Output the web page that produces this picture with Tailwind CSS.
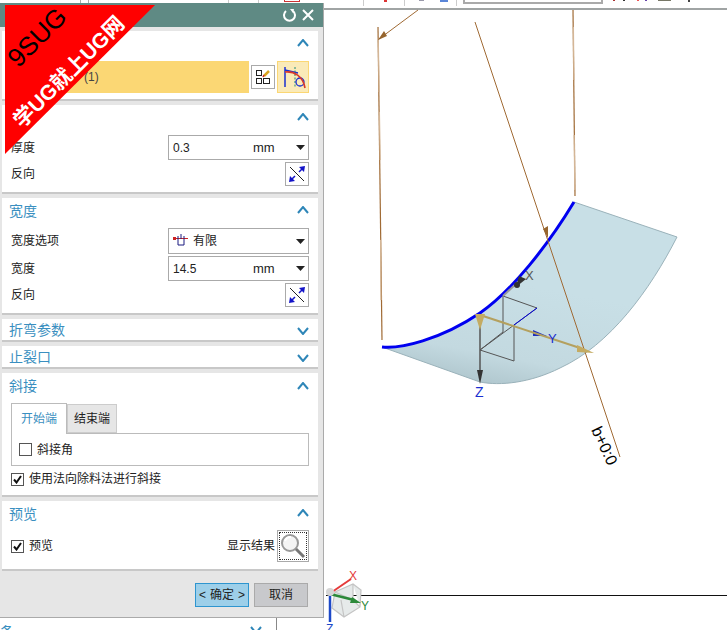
<!DOCTYPE html>
<html lang="en">
<head>
  <meta charset="UTF-8" />
  <title>轮廓弯边</title>
  <script src="https://cdn.jsdelivr.net/npm/@tailwindcss/browser@4"></script>
</head>
<body class="bg-white">
  <div class="relative w-[727px] h-[630px] overflow-hidden bg-white text-[12px] text-[#222] font-['Liberation_Sans','Noto_Sans_CJK_SC',sans-serif]">

    <!-- toolbar scraps at top -->
    <div class="absolute left-0 top-0 w-[727px] h-[10px] border-b-2 border-[#a0a4a4] bg-white">
      <div class="absolute left-[80px] top-0 w-[9px] h-[3px] border-x border-[#aaa]"></div>
      <div class="absolute left-[463px] -top-[2px] w-[140px] h-[6px] border-2 border-[#aaa]"></div>
      <div class="absolute left-[228px] top-0 w-[1px] h-[3px] bg-[#ccc]"></div>
      <div class="absolute left-[258px] top-0 w-[1px] h-[3px] bg-[#ccc]"></div>
      <div class="absolute left-[284px] top-0 w-[16px] h-[2px] border-b border-x border-[#c33]"></div>
      <div class="absolute left-[363px] top-0 w-[1px] h-[6px] bg-[#ccc]"></div>
      <div class="absolute left-[404px] top-0 w-[1px] h-[6px] bg-[#ccc]"></div>
      <div class="absolute left-[456px] top-0 w-[1px] h-[6px] bg-[#ccc]"></div>
      <div class="absolute left-[384px] top-0 w-[3px] h-[2px] bg-[#d33]"></div>
      <div class="absolute left-[419px] top-0 w-[5px] h-[1px] bg-[#99a]"></div>
      <div class="absolute left-[440px] top-0 w-[8px] h-[2px] bg-[#5a86d8]"></div>
      <div class="absolute left-[613px] top-0 w-[2px] h-[1px] bg-[#a33]"></div>
      <div class="absolute left-[623px] top-0 w-[2px] h-[1px] bg-[#333]"></div>
      <div class="absolute left-[637px] top-0 w-[2px] h-[1px] bg-[#e55]"></div>
      <div class="absolute left-[645px] top-0 w-[2px] h-[1px] bg-[#64a]"></div>
      <div class="absolute left-[658px] top-0 w-[13px] h-[1px] bg-[#776]"></div>
      <div class="absolute left-[688px] top-0 w-[2px] h-[2px] bg-[#444]"></div>
    </div>

    <!-- 3D view -->
    <svg class="absolute left-0 top-0" width="727" height="630" viewBox="0 0 727 630" fill="none">
      <defs>
        <linearGradient id="sheet" gradientUnits="userSpaceOnUse" x1="500" y1="280" x2="480" y2="385">
          <stop offset="0" stop-color="#c8dfe6" />
          <stop offset="0.7" stop-color="#c3d9e0" />
          <stop offset="1" stop-color="#afc6cd" />
        </linearGradient>
      </defs>
      <line x1="326" y1="595.5" x2="727" y2="595.5" stroke="#111" />
      <path d="M382 347 C400 349 440 340 480 313 C512 291 548 245 574 202 L677 237 C650 290 610 345 560 368 C530 383 500 386 480 382 Z" fill="url(#sheet)" />
      <path d="M382 347 L480 382 C500 386 530 383 560 368 C610 345 650 290 677 237 L574 202" stroke="#9ab2ba" stroke-width="1" />
      <path d="M382 347 C400 349 440 340 480 313 C512 291 548 245 574 202" stroke="#0000f0" stroke-width="3" />
      <path d="M378 27 L382 340" stroke="#a06a34" stroke-width="1.2" />
      <path d="M378.3 40 L379.1 92 M379.4 112 L380.2 160 M380.6 240 L381 300" stroke="#d4b696" stroke-width="1.2" />
      <path d="M573 10 L575 196" stroke="#a06a34" stroke-width="1.2" />
      <path d="M573.4 27 L573.9 80 M574.2 135 L574.8 190" stroke="#d4b696" stroke-width="1.2" />
      <path d="M475 22 L620 457" stroke="#a06a34" stroke-width="1" />
      <path d="M418 10 L379 39" stroke="#a06a34" stroke-width="1" />
      <path d="M378 40 L384 31 L387 36 Z" fill="#96652e" />
      <path d="M548 238 L543 229 L548 226 Z" fill="#96652e" />
      <!-- wcs box -->
      <path d="M503 296 L537 308 L514 325 L480 350 L514 361 L514 325 M503 296 L503 332 L480 350" stroke="#555" />
      <path d="M514 325 L537 308" stroke="#0000e0" />
      <path d="M503 296 L518 282" stroke="#999" stroke-width="2" />
      <path d="M516 287 L526 279 L519 276 Z" fill="#333" /><circle cx="517" cy="285" r="3" fill="#333" />
      <path d="M480 316 L480 378" stroke="#555" stroke-width="1.5" />
      <path d="M477 370 L483 370 L480 384 Z" fill="#333" />
      <path d="M533 330 L547 336 L533 336 Z" fill="#1f2fc0" />
      <path d="M480 315 L580 348" stroke="#b4a05e" stroke-width="2" />
      <path d="M475 314 L485 314 L480 330 Z" fill="#c4ab62" />
      <path d="M577 345 L594 353 L577 352 Z" fill="#c4ab62" />
      <text x="525" y="280" font-size="13" fill="#555" font-family="Liberation Sans">X</text>
      <text x="548" y="343" font-size="13" fill="#1a2fd0" font-family="Liberation Sans">Y</text>
      <text x="475" y="397" font-size="14" fill="#1a2fd0" font-family="Liberation Sans">Z</text>
      <!-- triad at lower left -->
      <path d="M335 592 L353 584 L361 590 L360 607 L344 617 L332 608 Z M353 584 L353 600 L360 607 M353 600 L335 592 M344 617 L341 600" fill="#e6eaea" stroke="#c4c4c4" stroke-width="1.2" />
      <path d="M332 592 L351 579" stroke="#e53b3b" stroke-width="2" />
      <path d="M330 594 L354 600" stroke="#2c8a3a" stroke-width="2.5" />
      <path d="M352 597 L361 603 L350 603 Z" fill="#2c8a3a" />
      <path d="M330 594 L330 622" stroke="#1d49c8" stroke-width="2.5" />
      <circle cx="330" cy="592" r="4" fill="#d6d6d6" />
      <text x="349" y="580" font-size="12" fill="#e53b3b" font-family="Liberation Sans">X</text>
      <text x="361" y="610" font-size="12" fill="#2c8a3a" font-family="Liberation Sans">Y</text>
      <text x="326" y="633" font-size="12" fill="#1d49c8" font-family="Liberation Sans">Z</text>
    </svg>
    <div class="absolute left-[580px] top-[439px] w-[48px] text-center text-[16px] leading-[14px] text-black rotate-[65deg]">b+0:0</div>

    <!-- leftover panel under the dialog -->
    <div class="absolute left-0 top-[618px] w-[277px] h-[12px] bg-white border-r border-[#888]">
      <div class="text-[14px] leading-[14px] mt-[7px] text-[#3a8fc0]">条</div>
      <svg class="absolute left-[250px] top-[8px]" width="12" height="8" viewBox="0 0 12 8" fill="none"><path d="M1 1 L6 7 L11 1" stroke="#2e86b8" stroke-width="2" /></svg>
    </div>

    <!-- dialog -->
    <div class="absolute left-0 top-[3px] w-[324px] h-[615px] bg-[#e6e6e6] border-r border-b border-[#aaa] flex flex-col">
      <div class="h-[24px] shrink-0 bg-[#5f8a84] flex items-center justify-end gap-[6px] pr-[9px] text-white">
        <svg width="14" height="14" viewBox="0 0 14 14" fill="none"><path d="M4 3 A5.5 5.5 0 1 0 11 3" stroke="#fff" stroke-width="2" /><path d="M8 1 L12 1 L11 5 Z" fill="#fff" /></svg>
        <svg width="12" height="12" viewBox="0 0 12 12" fill="none"><path d="M1 1 L11 11 M11 1 L1 11" stroke="#fff" stroke-width="2" /></svg>
      </div>

      <div class="flex flex-col gap-[4px] pl-[2px] pr-[5px] pt-[4px]">
        <!-- first group, title hidden under the ribbon -->
        <section class="bg-white border-b-2 border-[#c8c8c8] h-[70px] pl-[4px] pr-[9px]">
          <div class="h-[26px] mb-[4px] flex items-center justify-end">
            <svg class="mb-[2px]" width="12" height="8" viewBox="0 0 12 8" fill="none"><path d="M1 7 L6 1 L11 7" stroke="#2e86b8" stroke-width="2" /></svg>
          </div>
          <div class="flex items-center gap-[2px]">
            <div class="w-[243px] h-[32px] bg-[#fbd774] flex items-center pl-[78px] text-[#444]">(1)</div>
            <button class="w-[24px] h-[24px] bg-white border border-[#aaa] flex items-center justify-center">
              <svg width="16" height="16" viewBox="0 0 16 16" fill="none"><rect x="1.5" y="1.5" width="5" height="5" stroke="#222" /><rect x="1.5" y="9.5" width="5" height="5" stroke="#222" /><rect x="8.5" y="9.5" width="6" height="5" stroke="#222" /><path d="M9 7 L14 2" stroke="#d9a520" stroke-width="2.5" /><path d="M8 8 L9 6" stroke="#c22" stroke-width="1.5" /></svg>
            </button>
            <button class="w-[32px] h-[32px] bg-[#faeab8] border border-[#fbd774] flex items-center justify-center">
              <svg width="26" height="26" viewBox="0 0 26 26" fill="none"><path d="M5 3 L5 23" stroke="#1a2fd0" stroke-width="1.5" /><path d="M5 6 L18 9" stroke="#1a2fd0" stroke-width="1.3" /><path d="M15 3 L15 24" stroke="#1a8a7a" stroke-dasharray="2 1.5" /><circle cx="20" cy="18" r="4" stroke="#1a2fd0" stroke-width="1.3" /><path d="M5 8 C14 7 23 12 25 24" stroke="#d93a2a" stroke-width="1.6" /></svg>
            </button>
          </div>
        </section>

        <!-- 厚度 -->
        <section class="bg-white border-b-2 border-[#c8c8c8] h-[89px] pl-[9px] pr-[9px]">
          <div class="h-[26px] mb-[4px] flex items-center justify-end">
            <svg class="mb-[2px]" width="12" height="8" viewBox="0 0 12 8" fill="none"><path d="M1 7 L6 1 L11 7" stroke="#2e86b8" stroke-width="2" /></svg>
          </div>
          <div class="flex items-center justify-between">
            <span>厚度</span>
            <div class="w-[141px] h-[25px] border border-[#aaa] flex items-center pl-[4px] pr-[3px]">
              <span class="flex-1">0.3</span><span class="w-[43px] text-[13px] font-['Liberation_Sans']">mm</span>
              <svg width="9" height="5" viewBox="0 0 9 5"><path d="M0 0 L9 0 L4.5 5 Z" fill="#222" /></svg>
            </div>
          </div>
          <div class="flex items-center justify-between mt-[2px]">
            <span>反向</span>
            <button class="w-[24px] h-[24px] bg-white border border-[#aaa] flex items-center justify-center">
              <svg width="16" height="16" viewBox="0 0 16 16" fill="none"><path d="M1 1 L15 15" stroke="#222" /><path d="M3 13 L6 10 M13 3 L10 6" stroke="#1414c8" stroke-width="1.5" /><path d="M0 16 L1 10 L6 15 Z M16 0 L15 6 L10 1 Z" fill="#1414c8" /></svg>
            </button>
          </div>
        </section>

        <!-- 宽度 -->
        <section class="bg-white border-b-2 border-[#c8c8c8] h-[117px] pl-[9px] pr-[9px]">
          <div class="h-[26px] mb-[4px] -ml-[2px] flex items-center justify-between text-[14px] text-[#3a8fc0]">
            <span>宽度</span>
            <svg class="mb-[2px]" width="12" height="8" viewBox="0 0 12 8" fill="none"><path d="M1 7 L6 1 L11 7" stroke="#2e86b8" stroke-width="2" /></svg>
          </div>
          <div class="flex items-center justify-between">
            <span>宽度选项</span>
            <div class="w-[141px] h-[26px] border border-[#aaa] flex items-center pl-[4px] pr-[3px]">
              <svg width="16" height="14" viewBox="0 0 16 14" fill="none"><path d="M1 4.5 L15 4.5" stroke="#c22" /><path d="M5 2 L5 11 L11 11 L11 2 M8 0 L8 5" stroke="#1a1a80" /><rect x="0" y="3" width="3" height="3" fill="#c22" /></svg>
              <span class="flex-1 ml-[4px]">有限</span>
              <svg width="9" height="5" viewBox="0 0 9 5"><path d="M0 0 L9 0 L4.5 5 Z" fill="#222" /></svg>
            </div>
          </div>
          <div class="flex items-center justify-between mt-[2px]">
            <span>宽度</span>
            <div class="w-[141px] h-[25px] border border-[#aaa] flex items-center pl-[4px] pr-[3px]">
              <span class="flex-1">14.5</span><span class="w-[43px] text-[13px] font-['Liberation_Sans']">mm</span>
              <svg width="9" height="5" viewBox="0 0 9 5"><path d="M0 0 L9 0 L4.5 5 Z" fill="#222" /></svg>
            </div>
          </div>
          <div class="flex items-center justify-between mt-[2px]">
            <span>反向</span>
            <button class="w-[24px] h-[24px] bg-white border border-[#aaa] flex items-center justify-center">
              <svg width="16" height="16" viewBox="0 0 16 16" fill="none"><path d="M1 1 L15 15" stroke="#222" /><path d="M3 13 L6 10 M13 3 L10 6" stroke="#1414c8" stroke-width="1.5" /><path d="M0 16 L1 10 L6 15 Z M16 0 L15 6 L10 1 Z" fill="#1414c8" /></svg>
            </button>
          </div>
        </section>

        <section class="bg-white border-b-2 border-[#c8c8c8] h-[23px] pl-[7px] pr-[9px] pt-[2px] flex items-center justify-between text-[14px] text-[#3a8fc0]">
          <span>折弯参数</span>
          <svg width="12" height="8" viewBox="0 0 12 8" fill="none"><path d="M1 1 L6 7 L11 1" stroke="#2e86b8" stroke-width="2" /></svg>
        </section>
        <section class="bg-white border-b-2 border-[#c8c8c8] h-[23px] pl-[7px] pr-[9px] pt-[2px] flex items-center justify-between text-[14px] text-[#3a8fc0]">
          <span>止裂口</span>
          <svg width="12" height="8" viewBox="0 0 12 8" fill="none"><path d="M1 1 L6 7 L11 1" stroke="#2e86b8" stroke-width="2" /></svg>
        </section>

        <!-- 斜接 -->
        <section class="bg-white border-b-2 border-[#c8c8c8] h-[124px] pl-[9px] pr-[9px]">
          <div class="h-[26px] mb-[1px] -ml-[2px] flex items-center justify-between text-[14px] text-[#3a8fc0]">
            <span>斜接</span>
            <svg width="12" height="8" viewBox="0 0 12 8" fill="none"><path d="M1 7 L6 1 L11 7" stroke="#2e86b8" stroke-width="2" /></svg>
          </div>
          <div class="flex items-end h-[34px] relative z-10 -mb-px">
            <div class="w-[56px] h-[31px] bg-white border border-b-0 border-[#bbb] flex items-center justify-center text-[#3a8fc0]">开始端</div>
            <div class="w-[50px] h-[29px] mb-px bg-[#e6e6e6] border border-[#ccc] flex items-center justify-center">结束端</div>
          </div>
          <div class="h-[33px] border border-[#bbb] flex items-center pl-[7px] gap-[5px]">
            <div class="w-[13px] h-[13px] border border-[#555] bg-white"></div>
            <span>斜接角</span>
          </div>
          <div class="flex items-center gap-[5px] mt-[4px]">
            <div class="w-[13px] h-[13px] border border-[#555] bg-white flex items-center justify-center">
              <svg width="9" height="9" viewBox="0 0 9 9" fill="none"><path d="M1 4.5 L3.5 7.5 L8 1" stroke="#111" stroke-width="2" /></svg>
            </div>
            <span>使用法向除料法进行斜接</span>
          </div>
        </section>

        <!-- 预览 -->
        <section class="bg-white border-b-2 border-[#c8c8c8] h-[70px] pl-[9px] pr-[9px]">
          <div class="h-[26px] mb-[1px] -ml-[2px] flex items-center justify-between text-[14px] text-[#3a8fc0]">
            <span>预览</span>
            <svg class="mb-[2px]" width="12" height="8" viewBox="0 0 12 8" fill="none"><path d="M1 7 L6 1 L11 7" stroke="#2e86b8" stroke-width="2" /></svg>
          </div>
          <div class="flex items-center justify-between mt-[3px]">
            <div class="flex items-center gap-[5px]">
              <div class="w-[13px] h-[13px] border border-[#555] bg-white flex items-center justify-center">
                <svg width="9" height="9" viewBox="0 0 9 9" fill="none"><path d="M1 4.5 L3.5 7.5 L8 1" stroke="#111" stroke-width="2" /></svg>
              </div>
              <span>预览</span>
            </div>
            <div class="flex items-center gap-[2px]">
              <span>显示结果</span>
              <button class="w-[32px] h-[32px] bg-white border border-[#aaa] outline-1 outline-dotted -outline-offset-3 outline-[#333] flex items-center justify-center">
                <svg width="26" height="26" viewBox="0 0 26 26" fill="none"><circle cx="10" cy="10" r="8" fill="#f4f4f4" stroke="#999" stroke-width="2" /><path d="M5 8 A6 6 0 0 1 11 4" stroke="#fff" stroke-width="2" /><path d="M16 16 L24 24" stroke="#777" stroke-width="3" /></svg>
              </button>
            </div>
          </div>
        </section>
      </div>

      <div class="flex justify-end gap-[5px] pr-[15px] pt-[12px] text-[12px]">
        <button class="w-[54px] h-[24px] bg-[#9dcfe9] border border-[#2e95cf] flex items-center justify-between px-[3px]"><span>&lt;</span><span>确定</span><span>&gt;</span></button>
        <button class="w-[54px] h-[24px] bg-[#c8c9cc] border border-[#aaa] flex items-center justify-center">取消</button>
      </div>
    </div>

    <!-- watermark ribbon -->
    <svg class="absolute left-0 top-0" width="160" height="160" viewBox="0 0 160 160"><path d="M5 5 L155 5 L5 154 Z" fill="#ff0000" /></svg>
    <div class="absolute left-[-8px] top-[22px] w-[90px] text-center text-[26px] leading-[30px] text-black font-['Liberation_Sans'] -rotate-45">9SUG</div>
    <div class="absolute left-[-6px] top-[59px] w-[150px] text-center text-[21px] leading-[26px] font-bold text-white -rotate-45 whitespace-nowrap">学UG就上UG网</div>
  </div>
</body>
</html>
